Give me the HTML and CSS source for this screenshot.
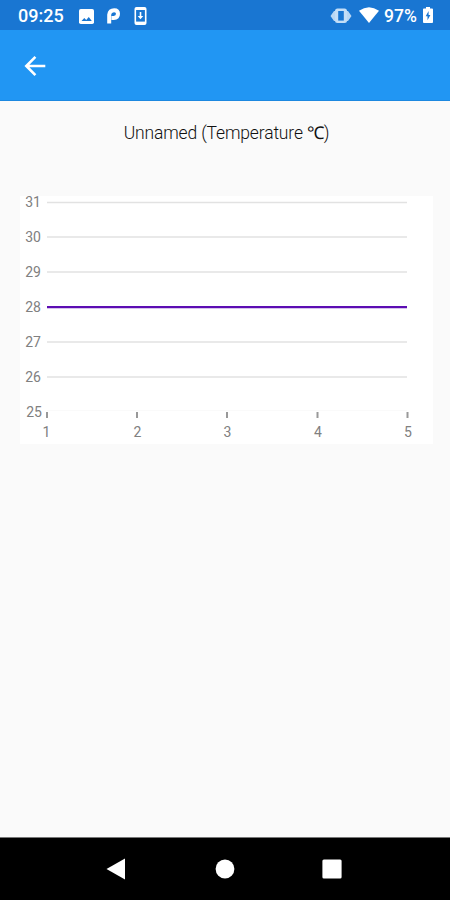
FILE: index.html
```html
<!DOCTYPE html>
<html lang="en">
<head>
    <meta charset="UTF-8">
    <meta name="viewport" content="width=device-width, initial-scale=1.0">
    <title>Temperature</title>
    <link rel="stylesheet" href="styles.css">
</head>
<body>
    <div class="screen">
        <!-- Status bar -->
        <div class="status-bar">
            <div class="status-left">
                <span class="clock">09:25</span>
                <svg class="icon-image" width="15" height="15" viewBox="0 0 15 15">
                    <rect width="15" height="15" rx="1.8" fill="#fff"/>
                    <path d="M2.5 12L5.3 9L7.2 11L9.8 8L12.8 12Z" fill="#1976d2"/>
                </svg>
                <svg class="icon-p" width="14" height="16" viewBox="0 0 14 16">
                    <path d="M2.2 15.5V6.8Q2.8 2.2 7.2 2.2Q11 2.2 11 5.8Q11 9.9 6.8 9.9H4.5" fill="none" stroke="#fff" stroke-width="4"/>
                </svg>
                <svg class="icon-update" width="13" height="18" viewBox="0 0 13 18">
                    <rect x="0.5" width="12" height="18" rx="2" fill="#fff"/>
                    <rect x="2.1" y="3" width="8.8" height="11.6" fill="#1976d2"/>
                    <path d="M5.7 5h1.6v4h2L6.5 12.2L3.7 9h2z" fill="#fff"/>
                </svg>
            </div>
            <div class="status-right">
                <svg class="icon-vibrate" width="22" height="16" viewBox="0 0 22 16">
                    <path d="M6 3H4L0.5 8L4 13H6M16 3H18L21.5 8L18 13H16" fill="#b9d7f4"/>
                    <rect x="5" y="0.5" width="12" height="14.5" rx="2.5" fill="#c4def7"/>
                    <rect x="8.2" y="3" width="5.6" height="9.6" fill="#1976d2"/>
                </svg>
                <svg class="icon-wifi" width="20" height="16" viewBox="0 0 20 16">
                    <path d="M0 3.8Q10 -3.2 20 3.8L10 16Z" fill="#fff"/>
                </svg>
                <span class="percent">97%</span>
                <svg class="icon-battery" width="10" height="16" viewBox="0 0 10 16">
                    <path d="M3 0h4v1.6h2.1q.9 0 .9.9v12.6q0 .9-.9.9H.9q-.9 0-.9-.9V2.5q0-.9.9-.9H3z" fill="#fff"/>
                    <path d="M5.6 4L2.7 9.2h1.8v4L7.4 8H5.6z" fill="#1976d2"/>
                </svg>
            </div>
        </div>

        <!-- App bar -->
        <div class="app-bar">
            <svg width="22" height="22" viewBox="0 0 22 22">
                <path d="M21.3 11H2.5M11.4 1.8L2.3 11L11.4 20.2" fill="none" stroke="#fff" stroke-width="2.6"/>
            </svg>
        </div>

        <div class="content">
            <h1 class="title">Unnamed (Temperature ℃)</h1>

            <!-- Line chart -->
            <svg class="chart" width="413" height="248" viewBox="0 0 413 248">
                <g class="grid-lines">
                    <path d="M27 6.5H387M27 41H387M27 76H387M27 146H387M27 181H387"/>
                </g>
                <path class="base-line" d="M27 214.5H387"/>
                <path class="ticks" d="M27 216v6M117 216v6M207 216v6M297.5 216v6M387.5 216v6"/>
                <path class="series" d="M27 111.2H387"/>
                <g class="y-labels">
                    <text x="21" y="11">31</text>
                    <text x="21" y="45.5">30</text>
                    <text x="21" y="81">29</text>
                    <text x="21" y="116">28</text>
                    <text x="21" y="151">27</text>
                    <text x="21" y="186">26</text>
                    <text x="22" y="221">25</text>
                </g>
                <g class="x-labels">
                    <text x="26.5" y="240.5">1</text>
                    <text x="117.5" y="240.5">2</text>
                    <text x="207.5" y="240.5">3</text>
                    <text x="298" y="240.5">4</text>
                    <text x="388" y="240.5">5</text>
                </g>
            </svg>
        </div>

        <!-- Navigation bar -->
        <div class="nav-bar">
            <svg width="20" height="22" viewBox="0 0 20 22">
                <path d="M0.5 11L19 0.5V21.5Z" fill="#fff"/>
            </svg>
            <svg class="nav-home" width="20" height="20" viewBox="0 0 20 20">
                <circle cx="10" cy="10" r="9.4" fill="#fff"/>
            </svg>
            <svg width="20" height="20" viewBox="0 0 20 20">
                <rect x="0.4" y="0.4" width="19.2" height="19.2" rx="1.5" fill="#fff"/>
            </svg>
        </div>
    </div>
</body>
</html>
```

FILE: styles.css
```css
body {
    font-family: Roboto, sans-serif;
    margin: 0;
    padding: 0;
}

svg {
    display: block;
    flex-shrink: 0;
}

.screen {
    display: flex;
    flex-direction: column;
    width: 450px;
    height: 900px;
    background: #fafafa;
    overflow: hidden;
}

/* Status bar */
.status-bar {
    display: flex;
    justify-content: space-between;
    height: 30px;
    box-sizing: border-box;
    padding: 0 17px 0 18px;
    background: #1976d2;
    color: #fff;
    font-size: 18px;
    font-weight: 500;
    line-height: 32px;
}

.status-left,
.status-right {
    display: flex;
    align-items: center;
    height: 32px;
}

.clock {
    width: 61px;
}

.icon-p {
    margin-left: 13px;
}

.icon-update {
    margin-left: 13px;
}

.icon-vibrate {
    margin-top: -1px;
}

.icon-wifi {
    margin-left: 7px;
    margin-top: -2px;
}

.percent {
    width: 39px;
    margin-left: 5px;
    font-size: 17.5px;
}

.icon-battery {
    margin-top: -3px;
}

/* App bar */
.app-bar {
    display: flex;
    align-items: center;
    height: 71px;
    box-sizing: border-box;
    padding-left: 24px;
    padding-top: 2px;
    background: #2196f3;
    border-bottom: 1px solid #1c88e0;
}

/* Content */
.content {
    flex: 1;
    padding: 19px 17px 0 20px;
}

.title {
    margin: 0 0 52px;
    height: 24px;
    font-size: 17.5px;
    font-weight: 300;
    letter-spacing: -0.15px;
    line-height: 26px;
    color: #111;
    text-align: center;
}

.chart {
    background: #fff;
    overflow: visible;
}

.grid-lines {
    stroke: #e2e2e2;
    stroke-width: 1.6;
}

.base-line {
    stroke: #fafafa;
}

.ticks {
    stroke: #999;
    stroke-width: 2;
}

.series {
    stroke: #5c0db3;
    stroke-width: 2.2;
}

.y-labels,
.x-labels {
    fill: #808080;
    font-size: 14px;
}

.y-labels {
    text-anchor: end;
}

.x-labels {
    text-anchor: middle;
}

/* Navigation bar */
.nav-bar {
    display: flex;
    align-items: center;
    justify-content: space-between;
    height: 63px;
    box-sizing: border-box;
    padding: 0 108px 1px 106px;
    background: #000;
    border-top: 1px solid #777;
}

.nav-home {
    margin-left: 2px;
}
```
